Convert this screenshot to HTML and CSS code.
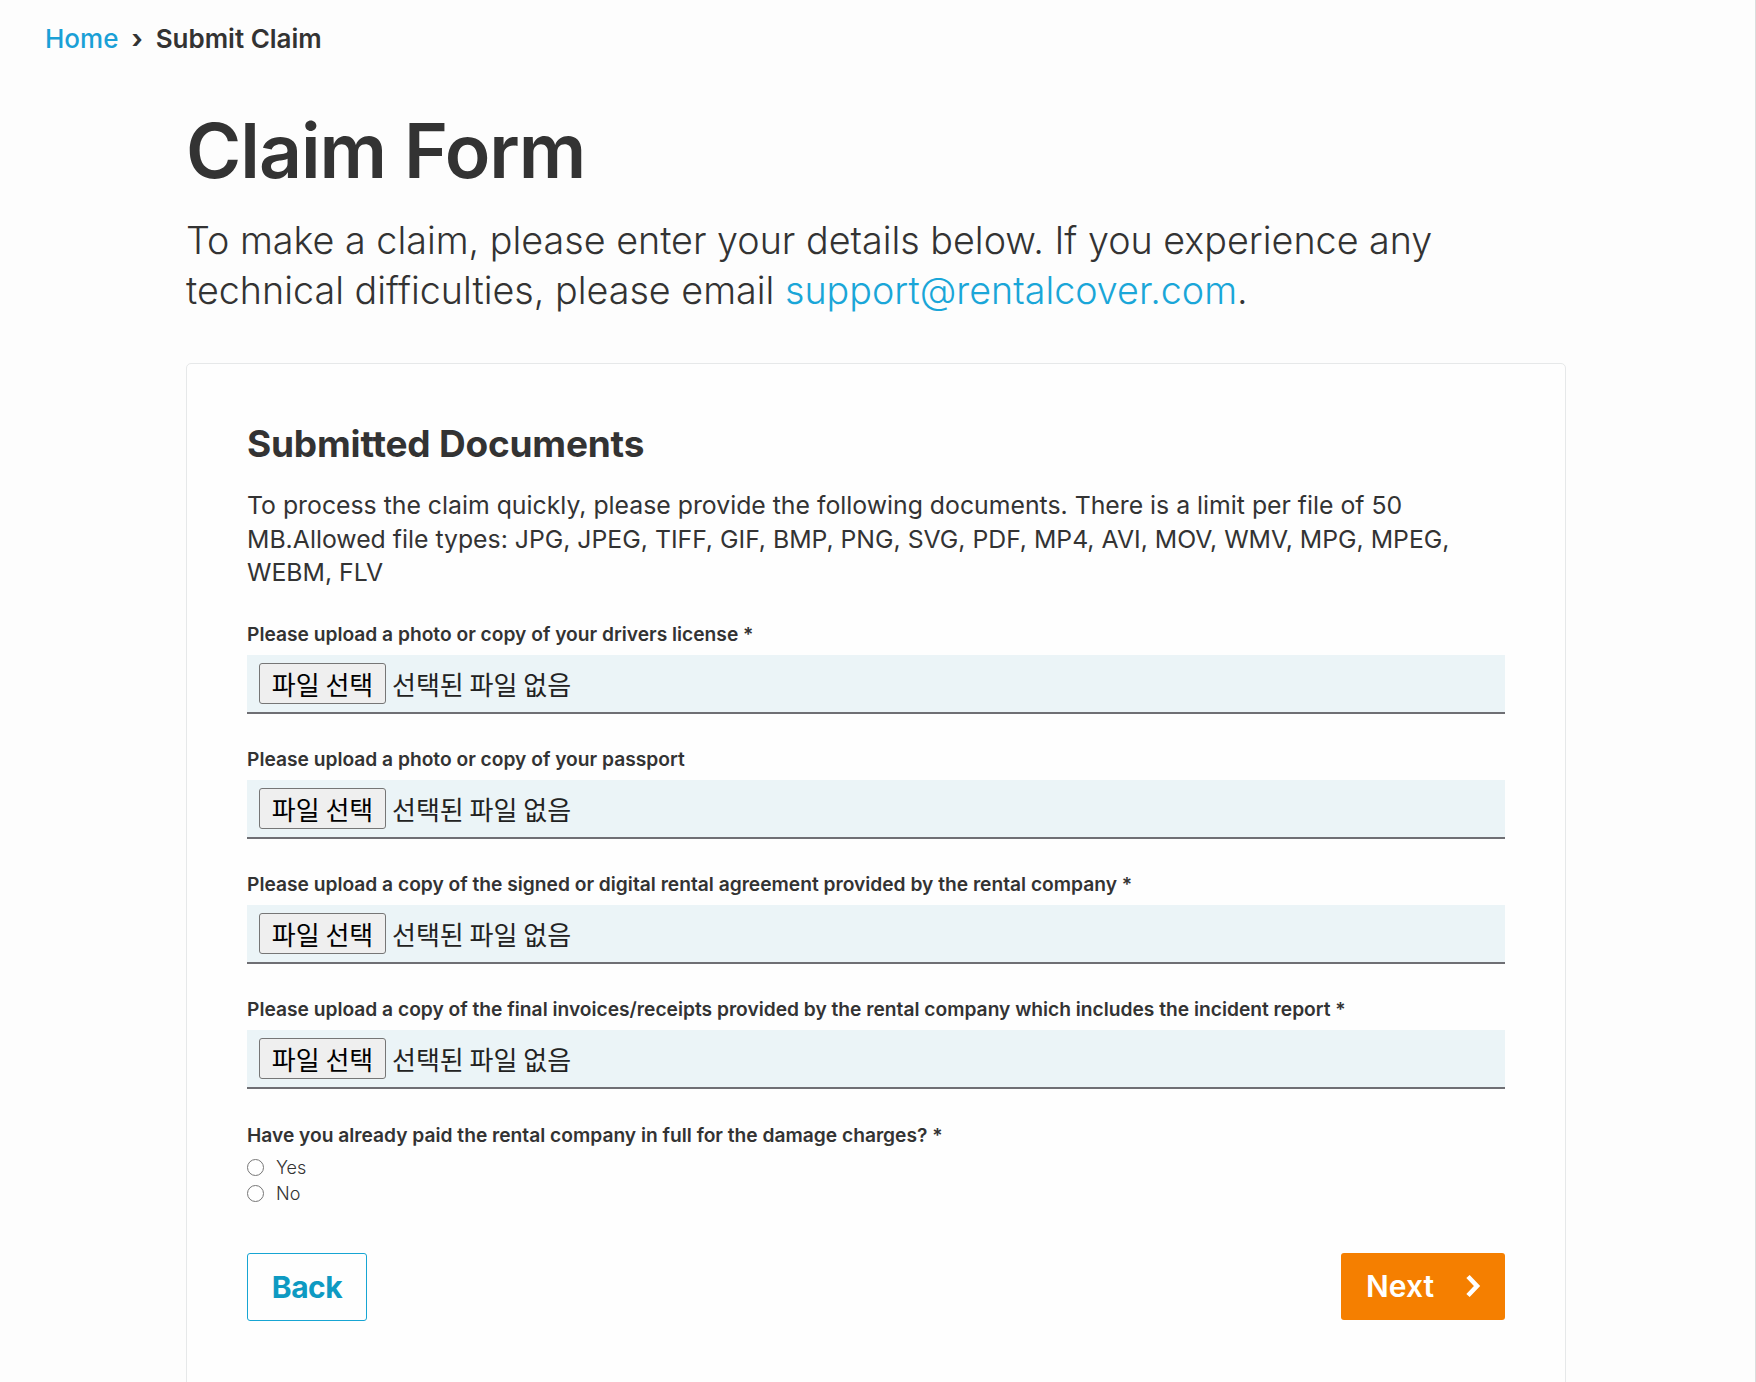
FILE: index.html
```html
<!DOCTYPE html>
<html lang="en">
<head>
<meta charset="utf-8">
<title>Claim Form</title>
<link rel="stylesheet" href="styles.css">
</head>
<body>
<nav class="breadcrumb">
  <a class="crumb-link" href="#">Home</a>
  <span class="crumb-sep">›</span>
  <span class="crumb-current">Submit Claim</span>
</nav>
<main class="page">
  <h1 class="title">Claim Form</h1>
  <p class="intro">To make a claim, please enter your details below. If you experience any technical difficulties, please email <a class="mail" href="#">support@rentalcover.com</a>.</p>

  <section class="card">
    <h2 class="card-title">Submitted Documents</h2>
    <p class="card-desc">To process the claim quickly, please provide the following documents. There is a limit per file of 50 MB.Allowed file types: JPG, JPEG, TIFF, GIF, BMP, PNG, SVG, PDF, MP4, AVI, MOV, WMV, MPG, MPEG, WEBM, FLV</p>

    <div class="field">
      <div class="label">Please upload a photo or copy of your drivers license *</div>
      <div class="file-box"><span class="file-btn">파일 선택</span><span class="file-none">선택된 파일 없음</span></div>
    </div>
    <div class="field">
      <div class="label">Please upload a photo or copy of your passport</div>
      <div class="file-box"><span class="file-btn">파일 선택</span><span class="file-none">선택된 파일 없음</span></div>
    </div>
    <div class="field">
      <div class="label">Please upload a copy of the signed or digital rental agreement provided by the rental company *</div>
      <div class="file-box"><span class="file-btn">파일 선택</span><span class="file-none">선택된 파일 없음</span></div>
    </div>
    <div class="field">
      <div class="label">Please upload a copy of the final invoices/receipts provided by the rental company which includes the incident report *</div>
      <div class="file-box"><span class="file-btn">파일 선택</span><span class="file-none">선택된 파일 없음</span></div>
    </div>

    <div class="question">
      <div class="label">Have you already paid the rental company in full for the damage charges? *</div>
      <label class="radio-row"><span class="radio"></span><span class="radio-text">Yes</span></label>
      <label class="radio-row"><span class="radio"></span><span class="radio-text">No</span></label>
    </div>

    <div class="actions">
      <a class="btn-back" href="#">Back</a>
      <a class="btn-next" href="#"><span>Next</span>
        <svg class="chev" width="20" height="26" viewBox="0 0 20 26"><path d="M5 3.5 L14 13 L5 22.5" fill="none" stroke="#fff" stroke-width="4.6"/></svg>
      </a>
    </div>
  </section>
</main>
</body>
</html>
```

FILE: styles.css
```css
html {
  background: #fdfdfd;
  border-right: 1px solid #d9dddd;
  min-height: 100%;
}
body {
  margin: 0;
  font-family: "Inter", "Noto Sans", sans-serif;
  color: #333;
  padding-right: 3px;
}
a { text-decoration: none; }

.breadcrumb {
  display: flex;
  align-items: center;
  padding: 24px 0 0 45px;
  height: 30px;
  font-size: 26px;
  font-weight: 600;
  line-height: 30px;
}
.crumb-link { color: #1aa0d6; font-weight: 500; }
.crumb-sep { margin: 0 13px; font-weight: 700; color: #333; }
.crumb-current { color: #333; }

.page {
  max-width: 1380px;
  margin: 0 auto;
}
.title {
  margin: 51px 0 0;
  font-size: 75px;
  font-weight: 600;
  line-height: 92px;
  letter-spacing: -1px;
  color: #333;
}
.intro {
  margin: 18px 0 0;
  font-size: 37.7px;
  font-weight: 300;
  line-height: 50px;
  color: #333;
}
.mail { color: #1aa6d8; }

.card {
  margin-top: 48px;
  background: #fefefe;
  border: 1px solid #e6e8e9;
  border-radius: 5px;
  padding: 58px 60px 120px;
}
.card-title {
  margin: 0;
  font-size: 37px;
  font-weight: 700;
  line-height: 44px;
  letter-spacing: -0.2px;
  color: #333;
}
.card-desc {
  margin: 23px 0 0;
  font-size: 24.8px;
  font-weight: 400;
  line-height: 33.5px;
  color: #333;
}

.field { margin-top: 33px; }
.field + .field { margin-top: 34px; }
.label {
  font-size: 19.2px;
  font-weight: 600;
  line-height: 22px;
  color: #333;
}
.file-box {
  margin-top: 10px;
  height: 57px;
  background: #ebf4f7;
  border-bottom: 2px solid #6f6f74;
  display: flex;
  align-items: center;
  padding-left: 12px;
  font-family: "Noto Sans CJK KR", sans-serif;
  font-size: 26px;
  color: #111;
}
.file-btn {
  box-sizing: border-box;
  height: 41px;
  width: 127px;
  display: flex;
  align-items: center;
  justify-content: center;
  background: #efefef;
  border: 1px solid #767676;
  border-radius: 3px;
  color: #000;
}
.file-none {
  margin-left: 6px;
  color: #222;
}

.question { margin-top: 35px; }
.radio-row {
  display: flex;
  align-items: center;
  height: 26px;
}
.question .label { margin-bottom: 9px; }
.radio {
  box-sizing: border-box;
  width: 17px;
  height: 17px;
  border: 1.5px solid #767676;
  border-radius: 50%;
  background: #fff;
  margin-right: 12px;
}
.radio-text {
  font-size: 18px;
  font-weight: 300;
  color: #333;
}

.actions {
  display: flex;
  justify-content: space-between;
  margin-top: 46px;
}
.btn-back {
  box-sizing: border-box;
  width: 120px;
  height: 68px;
  display: flex;
  align-items: center;
  justify-content: center;
  border: 1.5px solid #17a5d3;
  border-radius: 3px;
  color: #0e9ac2;
  font-size: 30px;
  font-weight: 700;
  letter-spacing: -0.5px;
}
.btn-next {
  box-sizing: border-box;
  width: 164px;
  height: 67px;
  display: flex;
  align-items: center;
  padding: 0 22px 0 25px;
  justify-content: space-between;
  background: #f57f00;
  border-radius: 3px;
  color: #fff;
  font-size: 30px;
  font-weight: 600;
}
.chev { display: block; }
```
